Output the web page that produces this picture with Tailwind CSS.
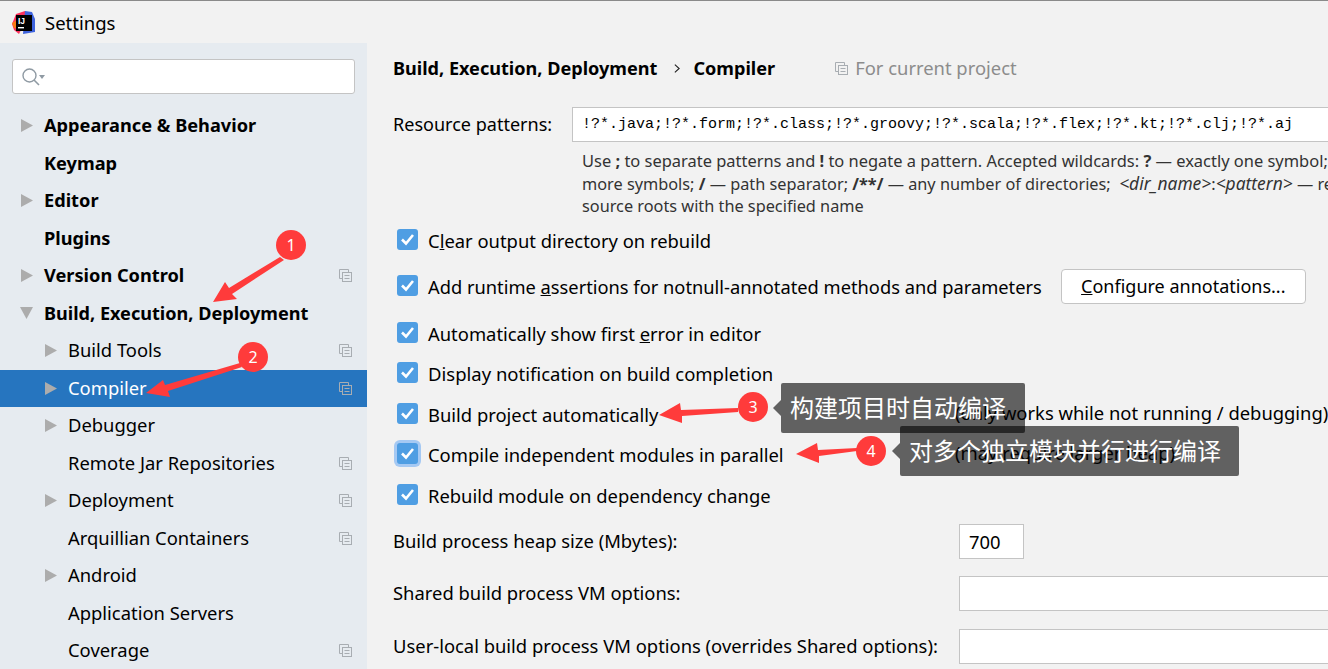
<!DOCTYPE html>
<html lang="en">
<head>
  <meta charset="UTF-8">
  <title>Settings</title>
  <script src="https://cdn.jsdelivr.net/npm/@tailwindcss/browser@4"></script>
</head>
<body class="relative w-[1328px] h-[669px] overflow-hidden bg-[#f2f2f2] text-[18.4px] text-black font-['Noto_Sans','Noto_Sans_CJK_SC',sans-serif]">
  <!-- Title bar -->
  <header class="h-[43px] bg-[#f2f2f2] border-t border-[#8a8a8a] flex items-center pl-[11px] gap-[9px]">
    <svg class="w-[25px] h-[25px]" viewBox="0 0 25 25">
      <path d="M1 14 L5 4 L14 1 L14 12 L8 24 L3 20 Z" fill="#fe315d"/>
      <path d="M14 1 L21 2 L24 9 L24 22 L12 24 Z" fill="#3e63dd"/>
      <path d="M1 13 L6 10 L8 19 L3 18 Z" fill="#f97a12"/>
      <rect x="5" y="5" width="16" height="16" fill="#000"/>
      <text x="7" y="13.5" font-size="8.5" font-weight="700" fill="#fff" font-family="Liberation Sans">IJ</text>
      <rect x="7" y="17" width="6" height="1.4" fill="#fff"/>
    </svg>
    <span class="text-[18.5px] mt-[1px]">Settings</span>
  </header>

  <div class="flex h-[626px]">
    <!-- Sidebar -->
    <aside class="w-[367px] h-full bg-[#e6ebf0] shrink-0 overflow-hidden">
      <div class="mx-[12px] mt-[16px] mb-[13px] h-[35px] bg-white border border-[#c4c4c4] rounded-[3px] flex items-center pl-[8px]">
        <svg class="w-[26px] h-[20px]" viewBox="0 0 26 20" fill="none">
          <circle cx="8.5" cy="8.5" r="6.5" stroke="#8f9aa3" stroke-width="1.4"/>
          <path d="M13 13 L18 18" stroke="#8f9aa3" stroke-width="1.6"/>
          <path d="M18 8 H24 L21 12 Z" fill="#8f9aa3"/>
        </svg>
      </div>

      <div class="h-[37.5px] flex items-center font-bold text-[18.2px]">
        <svg class="ml-[21px] w-[12px] h-[13px]" viewBox="0 0 12 13"><path d="M0 0 L12 6.5 L0 13 Z" fill="#acacac"/></svg>
        <span class="ml-[11px]">Appearance &amp; Behavior</span>
      </div>
      <div class="h-[37.5px] flex items-center font-bold text-[18.2px]"><span class="ml-[44px]">Keymap</span></div>
      <div class="h-[37.5px] flex items-center font-bold text-[18.2px]">
        <svg class="ml-[21px] w-[12px] h-[13px]" viewBox="0 0 12 13"><path d="M0 0 L12 6.5 L0 13 Z" fill="#acacac"/></svg>
        <span class="ml-[11px]">Editor</span>
      </div>
      <div class="h-[37.5px] flex items-center font-bold text-[18.2px]"><span class="ml-[44px]">Plugins</span></div>
      <div class="h-[37.5px] flex items-center font-bold text-[18.2px]">
        <svg class="ml-[21px] w-[12px] h-[13px]" viewBox="0 0 12 13"><path d="M0 0 L12 6.5 L0 13 Z" fill="#acacac"/></svg>
        <span class="ml-[11px]">Version Control</span>
        <svg class="ml-auto mr-[15px] w-[13px] h-[13px]" viewBox="0 0 13 13" fill="none" stroke="#a8adb2"><path d="M3.5 9.5 H0.5 V0.5 H9.5 V3.5"/><rect x="3.5" y="3.5" width="9" height="9"/><path d="M5.5 6.5 H10.5 M5.5 9.5 H10.5"/></svg>
      </div>
      <div class="h-[37.5px] flex items-center font-bold text-[18.1px]">
        <svg class="ml-[20px] w-[13px] h-[12px]" viewBox="0 0 13 12"><path d="M0 0 L13 0 L6.5 12 Z" fill="#acacac"/></svg>
        <span class="ml-[11px]">Build, Execution, Deployment</span>
      </div>
      <div class="h-[37.5px] flex items-center">
        <svg class="ml-[45px] w-[12px] h-[13px]" viewBox="0 0 12 13"><path d="M0 0 L12 6.5 L0 13 Z" fill="#acacac"/></svg>
        <span class="ml-[11px] -mt-[1px]">Build Tools</span>
        <svg class="ml-auto mr-[15px] w-[13px] h-[13px]" viewBox="0 0 13 13" fill="none" stroke="#a8adb2"><path d="M3.5 9.5 H0.5 V0.5 H9.5 V3.5"/><rect x="3.5" y="3.5" width="9" height="9"/><path d="M5.5 6.5 H10.5 M5.5 9.5 H10.5"/></svg>
      </div>
      <div class="h-[37.5px] flex items-center bg-[#2675bf] text-white">
        <svg class="ml-[45px] w-[12px] h-[13px]" viewBox="0 0 12 13"><path d="M0 0 L12 6.5 L0 13 Z" fill="#acacac"/></svg>
        <span class="ml-[11px]">Compiler</span>
        <svg class="ml-auto mr-[15px] w-[13px] h-[13px]" viewBox="0 0 13 13" fill="none" stroke="#a8adb2"><path d="M3.5 9.5 H0.5 V0.5 H9.5 V3.5"/><rect x="3.5" y="3.5" width="9" height="9"/><path d="M5.5 6.5 H10.5 M5.5 9.5 H10.5"/></svg>
      </div>
      <div class="h-[37.5px] flex items-center">
        <svg class="ml-[45px] w-[12px] h-[13px]" viewBox="0 0 12 13"><path d="M0 0 L12 6.5 L0 13 Z" fill="#acacac"/></svg>
        <span class="ml-[11px] -mt-[1px]">Debugger</span>
      </div>
      <div class="h-[37.5px] flex items-center">
        <span class="ml-[68px]">Remote Jar Repositories</span>
        <svg class="ml-auto mr-[15px] w-[13px] h-[13px]" viewBox="0 0 13 13" fill="none" stroke="#a8adb2"><path d="M3.5 9.5 H0.5 V0.5 H9.5 V3.5"/><rect x="3.5" y="3.5" width="9" height="9"/><path d="M5.5 6.5 H10.5 M5.5 9.5 H10.5"/></svg>
      </div>
      <div class="h-[37.5px] flex items-center">
        <svg class="ml-[45px] w-[12px] h-[13px]" viewBox="0 0 12 13"><path d="M0 0 L12 6.5 L0 13 Z" fill="#acacac"/></svg>
        <span class="ml-[11px] -mt-[1px]">Deployment</span>
        <svg class="ml-auto mr-[15px] w-[13px] h-[13px]" viewBox="0 0 13 13" fill="none" stroke="#a8adb2"><path d="M3.5 9.5 H0.5 V0.5 H9.5 V3.5"/><rect x="3.5" y="3.5" width="9" height="9"/><path d="M5.5 6.5 H10.5 M5.5 9.5 H10.5"/></svg>
      </div>
      <div class="h-[37.5px] flex items-center">
        <span class="ml-[68px]">Arquillian Containers</span>
        <svg class="ml-auto mr-[15px] w-[13px] h-[13px]" viewBox="0 0 13 13" fill="none" stroke="#a8adb2"><path d="M3.5 9.5 H0.5 V0.5 H9.5 V3.5"/><rect x="3.5" y="3.5" width="9" height="9"/><path d="M5.5 6.5 H10.5 M5.5 9.5 H10.5"/></svg>
      </div>
      <div class="h-[37.5px] flex items-center">
        <svg class="ml-[45px] w-[12px] h-[13px]" viewBox="0 0 12 13"><path d="M0 0 L12 6.5 L0 13 Z" fill="#acacac"/></svg>
        <span class="ml-[11px] -mt-[1px]">Android</span>
      </div>
      <div class="h-[37.5px] flex items-center"><span class="ml-[68px]">Application Servers</span></div>
      <div class="h-[37.5px] flex items-center">
        <span class="ml-[68px] -mt-[1px]">Coverage</span>
        <svg class="ml-auto mr-[15px] w-[13px] h-[13px]" viewBox="0 0 13 13" fill="none" stroke="#a8adb2"><path d="M3.5 9.5 H0.5 V0.5 H9.5 V3.5"/><rect x="3.5" y="3.5" width="9" height="9"/><path d="M5.5 6.5 H10.5 M5.5 9.5 H10.5"/></svg>
      </div>
    </aside>

    <!-- Main panel -->
    <main class="flex-1 min-w-0 pl-[26px] overflow-hidden whitespace-nowrap">
      <!-- Breadcrumb -->
      <div class="h-[50px] flex items-center">
        <span class="mt-[2px] font-bold text-[18.1px]">Build, Execution, Deployment</span>
        <svg class="ml-[17px] w-[6px] h-[11px]" viewBox="0 0 7 11" fill="none" stroke="#222" stroke-width="1.3"><path d="M1 1 L6 5.5 L1 10"/></svg>
        <span class="ml-[13px] mt-[2px] font-bold text-[18.1px]">Compiler</span>
        <svg class="ml-[60px] w-[13px] h-[13px]" viewBox="0 0 13 13" fill="none" stroke="#a8adb2"><path d="M3.5 9.5 H0.5 V0.5 H9.5 V3.5"/><rect x="3.5" y="3.5" width="9" height="9"/><path d="M5.5 6.5 H10.5 M5.5 9.5 H10.5"/></svg>
        <span class="ml-[7px] text-[#8c8c8c]">For current project</span>
      </div>

      <!-- Resource patterns -->
      <div class="mt-[14px] h-[35px] flex items-center">
        <span class="w-[179px] shrink-0 text-[18.05px]">Resource patterns:</span>
        <div class="w-[800px] shrink-0 h-[35px] bg-white border border-[#c4c4c4] flex items-center pl-[9px] pt-[1px] font-['Liberation_Mono',monospace] text-[15px]">!?*.java;!?*.form;!?*.class;!?*.groovy;!?*.scala;!?*.flex;!?*.kt;!?*.clj;!?*.aj</div>
      </div>
      <div class="ml-[189px] mt-[8px] text-[16.3px] leading-[22.5px] text-[#333]">
        <p class="text-[16.45px]">Use <b>;</b> to separate patterns and <b>!</b> to negate a pattern. Accepted wildcards: <b>?</b> — exactly one symbol; <b>*</b> — zero or</p>
        <p class="h-[22.5px] -mt-[1px]">more symbols; <b>/</b> — path separator; <b>/**/</b> — any number of directories; &nbsp;<i class="text-[17.4px]">&lt;dir_name&gt;</i>:<i class="text-[17.4px]">&lt;pattern&gt;</i> — restrict to</p>
        <p class="mt-[1px]">source roots with the specified name</p>
      </div>

      <!-- Checkboxes -->
      <div class="mt-[2.5px] h-[40px] flex items-center">
        <span class="ml-[4px] -mt-[1px] w-[21px] h-[21px] shrink-0 rounded-[3px] bg-[#4f9ee3] flex items-center justify-center"><svg class="w-[15px] h-[13px]" viewBox="0 0 15 13" fill="none" stroke="#fff" stroke-width="2.6"><path d="M2 6.5 L6 10.5 L13 2"/></svg></span>
        <span class="ml-[10px] mt-[2px]">C<u>l</u>ear output directory on rebuild</span>
      </div>
      <div class="mt-[6px] h-[40px] flex items-center">
        <span class="ml-[4px] -mt-[1px] w-[21px] h-[21px] shrink-0 rounded-[3px] bg-[#4f9ee3] flex items-center justify-center"><svg class="w-[15px] h-[13px]" viewBox="0 0 15 13" fill="none" stroke="#fff" stroke-width="2.6"><path d="M2 6.5 L6 10.5 L13 2"/></svg></span>
        <span class="ml-[10px] mt-[2px] text-[18.3px]">Add runtime <u>a</u>ssertions for notnull-annotated methods and parameters</span>
        <span class="ml-[19px] mt-[1px] w-[245px] h-[35px] shrink-0 bg-white border border-[#c4c4c4] rounded-[4px] flex items-center justify-center text-[18px]"><span><u>C</u>onfigure annotations...</span></span>
      </div>
      <div class="mt-[7px] h-[40px] flex items-center">
        <span class="ml-[4px] -mt-[1px] w-[21px] h-[21px] shrink-0 rounded-[3px] bg-[#4f9ee3] flex items-center justify-center"><svg class="w-[15px] h-[13px]" viewBox="0 0 15 13" fill="none" stroke="#fff" stroke-width="2.6"><path d="M2 6.5 L6 10.5 L13 2"/></svg></span>
        <span class="ml-[10px] mt-[2px]">Automatically show first <u>e</u>rror in editor</span>
      </div>
      <div class="h-[40px] flex items-center">
        <span class="ml-[4px] -mt-[1px] w-[21px] h-[21px] shrink-0 rounded-[3px] bg-[#4f9ee3] flex items-center justify-center"><svg class="w-[15px] h-[13px]" viewBox="0 0 15 13" fill="none" stroke="#fff" stroke-width="2.6"><path d="M2 6.5 L6 10.5 L13 2"/></svg></span>
        <span class="ml-[10px] mt-[2px] text-[18.5px]">Display notification on build completion</span>
      </div>
      <div class="mt-[1px] h-[40px] flex items-center">
        <span class="ml-[4px] -mt-[1px] w-[21px] h-[21px] shrink-0 rounded-[3px] bg-[#4f9ee3] flex items-center justify-center"><svg class="w-[15px] h-[13px]" viewBox="0 0 15 13" fill="none" stroke="#fff" stroke-width="2.6"><path d="M2 6.5 L6 10.5 L13 2"/></svg></span>
        <span class="ml-[10px] mt-[2px] w-[527px] shrink-0">Build project automatically</span>
        <span class="-mt-[3px]">(only works while not running / debugging)</span>
      </div>
      <div class="h-[40px] flex items-center">
        <span class="ml-[4px] -mt-[1px] w-[21px] h-[21px] shrink-0 rounded-[3px] bg-[#4f9ee3] ring-3 ring-[#a5c9f3] flex items-center justify-center"><svg class="w-[15px] h-[13px]" viewBox="0 0 15 13" fill="none" stroke="#fff" stroke-width="2.6"><path d="M2 6.5 L6 10.5 L13 2"/></svg></span>
        <span class="ml-[10px] mt-[2px] w-[527px] shrink-0">Compile independent modules in parallel</span>
        <span class="-mt-[3px]">(may require larger heap)</span>
      </div>
      <div class="mt-[1px] h-[40px] flex items-center">
        <span class="ml-[4px] -mt-[1px] w-[21px] h-[21px] shrink-0 rounded-[3px] bg-[#4f9ee3] flex items-center justify-center"><svg class="w-[15px] h-[13px]" viewBox="0 0 15 13" fill="none" stroke="#fff" stroke-width="2.6"><path d="M2 6.5 L6 10.5 L13 2"/></svg></span>
        <span class="ml-[10px] mt-[2px]">Rebuild module on dependency change</span>
      </div>

      <!-- Build process options -->
      <div class="mt-[9px] h-[35px] flex items-center">
        <span class="w-[566px] shrink-0 -mt-[2px]">Build process heap size (Mbytes):</span>
        <div class="w-[65px] h-[35px] bg-white border border-[#c4c4c4] flex items-center pl-[9px]">700</div>
      </div>
      <div class="mt-[17px] h-[35px] flex items-center">
        <span class="w-[566px] shrink-0 -mt-[2px]">Shared build process VM options:</span>
        <div class="w-[500px] shrink-0 h-[35px] bg-white border border-[#c4c4c4]"></div>
      </div>
      <div class="mt-[18px] h-[35px] flex items-center">
        <span class="w-[566px] shrink-0 -mt-[2px]">User-local build process VM options (overrides Shared options):</span>
        <div class="w-[500px] shrink-0 h-[35px] bg-white border border-[#c4c4c4]"></div>
      </div>
    </main>
  </div>

  <!-- Annotations drawn over the screenshot -->
  <svg class="absolute left-0 top-0 w-[1328px] h-[669px] pointer-events-none" viewBox="0 0 1328 669" fill="#ff3b3b">
    <path d="M213 302 L225 282 L229 288 L280 257 L284 260 L232 294 L237 299 Z"/>
    <path d="M146 393 L163 380 L165 385 L240 363 L242 367 L168 391 L170 397 Z"/>
    <path d="M659 415 L680 403 L681 410 L738 408 L738 412 L682 416 L682 423 Z"/>
    <path d="M796 454 L817 443 L818 450 L857 448 L857 451 L819 456 L819 463 Z"/>
  </svg>
  <div class="absolute left-[276px] top-[230px] w-[30px] h-[30px] rounded-full bg-[#ff3b3b] text-white text-[16px] flex items-center justify-center">1</div>
  <div class="absolute left-[238px] top-[342px] w-[30px] h-[30px] rounded-full bg-[#ff3b3b] text-white text-[16px] flex items-center justify-center">2</div>
  <div class="absolute left-[738px] top-[392px] w-[30px] h-[30px] rounded-full bg-[#ff3b3b] text-white text-[16px] flex items-center justify-center">3</div>
  <div class="absolute left-[856px] top-[436px] w-[30px] h-[30px] rounded-full bg-[#ff3b3b] text-white text-[16px] flex items-center justify-center">4</div>

  <div class="absolute left-[781px] top-[383px] w-[244px] h-[50px] rounded-[2px] bg-black/60 text-white text-[24px] flex items-center pl-[9px] whitespace-nowrap">构建项目时自动编译
    <span class="absolute -left-[8px] top-[17px] w-0 h-0 border-y-[8px] border-y-transparent border-r-[8px] border-r-black/60"></span>
  </div>
  <div class="absolute left-[900px] top-[426px] w-[339px] h-[50px] rounded-[2px] bg-black/60 text-white text-[24px] flex items-center pl-[9px] whitespace-nowrap">对多个独立模块并行进行编译
    <span class="absolute -left-[8px] top-[17px] w-0 h-0 border-y-[8px] border-y-transparent border-r-[8px] border-r-black/60"></span>
  </div>
</body>
</html>
